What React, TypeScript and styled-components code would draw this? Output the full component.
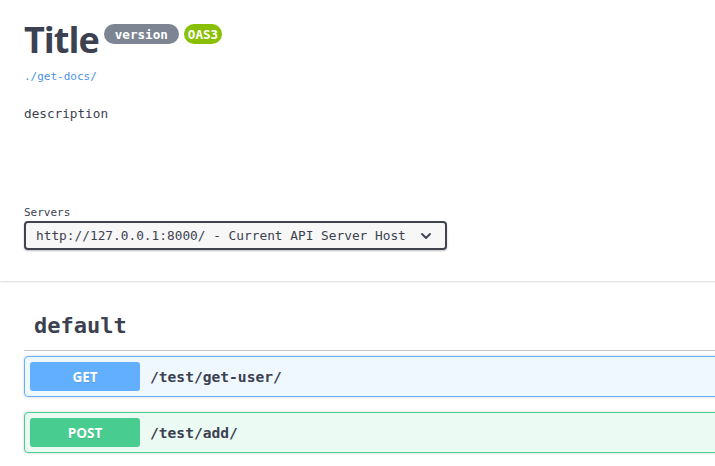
import React from 'react';
import styled, {createGlobalStyle} from 'styled-components';

const GlobalStyle = createGlobalStyle`
  html, body {
    margin: 0;
    padding: 0;
    background: #fff;
    overflow: hidden;
  }
  body {
    font-family: 'Open Sans', sans-serif;
    color: #3b4151;
  }
`

const mono = `'DejaVu Sans Mono', 'Liberation Mono', monospace`

const PageStyled = styled.div`
  width: 1000px;
`

const WrapperStyled = styled.div`
  padding: 0 24px;
`

const InfoStyled = styled.div`
  padding-top: 22px;
`

const TitleRowStyled = styled.div`
  display: flex;
  align-items: flex-start;
  gap: 5px;
`

const TitleStyled = styled.h2`
  margin: 0 0 0 0;
  font-family: 'Open Sans', sans-serif;
  font-size: 36px;
  line-height: 36px;
  font-weight: 700;
  letter-spacing: -1px;
  color: #3b4151;
`

interface BadgeProps {
    bg: string
    pad: number
}
const BadgeStyled = styled.span<BadgeProps>`
  margin-top: 2px;
  height: 20px;
  display: flex;
  align-items: center;
  padding: 0 ${props => props.pad}px;
  border-radius: 57px;
  background: ${props => props.bg};
  color: #fff;
  font-family: ${mono};
  font-size: 12.6px;
  font-weight: 700;
`

const LinkStyled = styled.a`
  display: block;
  margin-top: 12px;
  font-family: ${mono};
  font-size: 11px;
  line-height: 14px;
  color: #4990e2;
  text-decoration: none;
`

const DescStyled = styled.p`
  margin: 22px 0 0;
  font-family: ${mono};
  font-size: 12.7px;
  line-height: 16px;
  color: #3b4151;
`

const SchemeStyled = styled.div`
  padding: 84px 0 31px;
  background: #fff;
  box-shadow: 0 1px 2px 0 rgba(0, 0, 0, .15);
`

const LabelStyled = styled.div`
  font-family: ${mono};
  font-size: 11px;
  line-height: 14px;
  color: #3b4151;
  margin-bottom: 1px;
`

const SelectStyled = styled.div`
  box-sizing: border-box;
  width: 423px;
  height: 29px;
  display: flex;
  align-items: center;
  justify-content: space-between;
  padding: 0 14px 0 10px;
  border: 2px solid #41444e;
  border-radius: 4px;
  background: #f7f7f7;
  box-shadow: 0 1px 2px 0 rgba(0, 0, 0, .25);
  font-family: ${mono};
  font-size: 12.8px;
  font-weight: 400;
  color: #3b4151;
`

const TagStyled = styled.h3`
  margin: 20px 0 5px;
  padding: 10px;
  border-bottom: 1px solid rgba(59, 65, 81, .3);
  font-family: ${mono};
  font-size: 22px;
  line-height: 29px;
  font-weight: 700;
  color: #3b4151;
`

interface OpProps {
    color: string
}
const OpBlockStyled = styled.div<OpProps>`
  display: flex;
  align-items: center;
  margin-bottom: 15px;
  padding: 5px;
  border: 1px solid ${props => props.color};
  border-radius: 4px;
  background: ${props => props.color}1a;
  box-shadow: 0 0 3px rgba(0, 0, 0, .19);
`

const MethodStyled = styled.span<OpProps>`
  width: 110px;
  height: 29px;
  display: flex;
  align-items: center;
  justify-content: center;
  border-radius: 3px;
  background: ${props => props.color};
  color: #fff;
  font-family: 'Open Sans', sans-serif;
  font-size: 13.5px;
  font-weight: 700;
  text-shadow: 0 1px 0 rgba(0, 0, 0, .1);
`

const PathStyled = styled.span`
  margin-left: 10px;
  font-family: ${mono};
  font-size: 14.6px;
  font-weight: 700;
  color: #3b4151;
`

const Chevron = () => (
    <svg width="10" height="6" viewBox="0 0 10 6" fill="none">
        <path d="M1 1l4 4 4-4" stroke="#3b4151" strokeWidth="1.8" strokeLinecap="round" strokeLinejoin="round"/>
    </svg>
)

const ops = [
    {method: 'GET', path: '/test/get-user/', color: '#61affe'},
    {method: 'POST', path: '/test/add/', color: '#49cc90'},
]

function App() {
    return (
        <PageStyled>
            <GlobalStyle/>
            <WrapperStyled>
                <InfoStyled>
                    <TitleRowStyled>
                        <TitleStyled>Title</TitleStyled>
                        <BadgeStyled bg="#7d8492" pad={11}>version</BadgeStyled>
                        <BadgeStyled bg="#89bf04" pad={4}>OAS3</BadgeStyled>
                    </TitleRowStyled>
                    <LinkStyled href="#">./get-docs/</LinkStyled>
                    <DescStyled>description</DescStyled>
                </InfoStyled>
            </WrapperStyled>
            <SchemeStyled>
                <WrapperStyled>
                    <LabelStyled>Servers</LabelStyled>
                    <SelectStyled>
                        <span>http://127.0.0.1:8000/ - Current API Server Host</span>
                        <Chevron/>
                    </SelectStyled>
                </WrapperStyled>
            </SchemeStyled>
            <WrapperStyled>
                <TagStyled>default</TagStyled>
                {ops.map(op => (
                    <OpBlockStyled key={op.method} color={op.color}>
                        <MethodStyled color={op.color}>{op.method}</MethodStyled>
                        <PathStyled>{op.path}</PathStyled>
                    </OpBlockStyled>
                ))}
            </WrapperStyled>
        </PageStyled>
    );
}

export default App;
